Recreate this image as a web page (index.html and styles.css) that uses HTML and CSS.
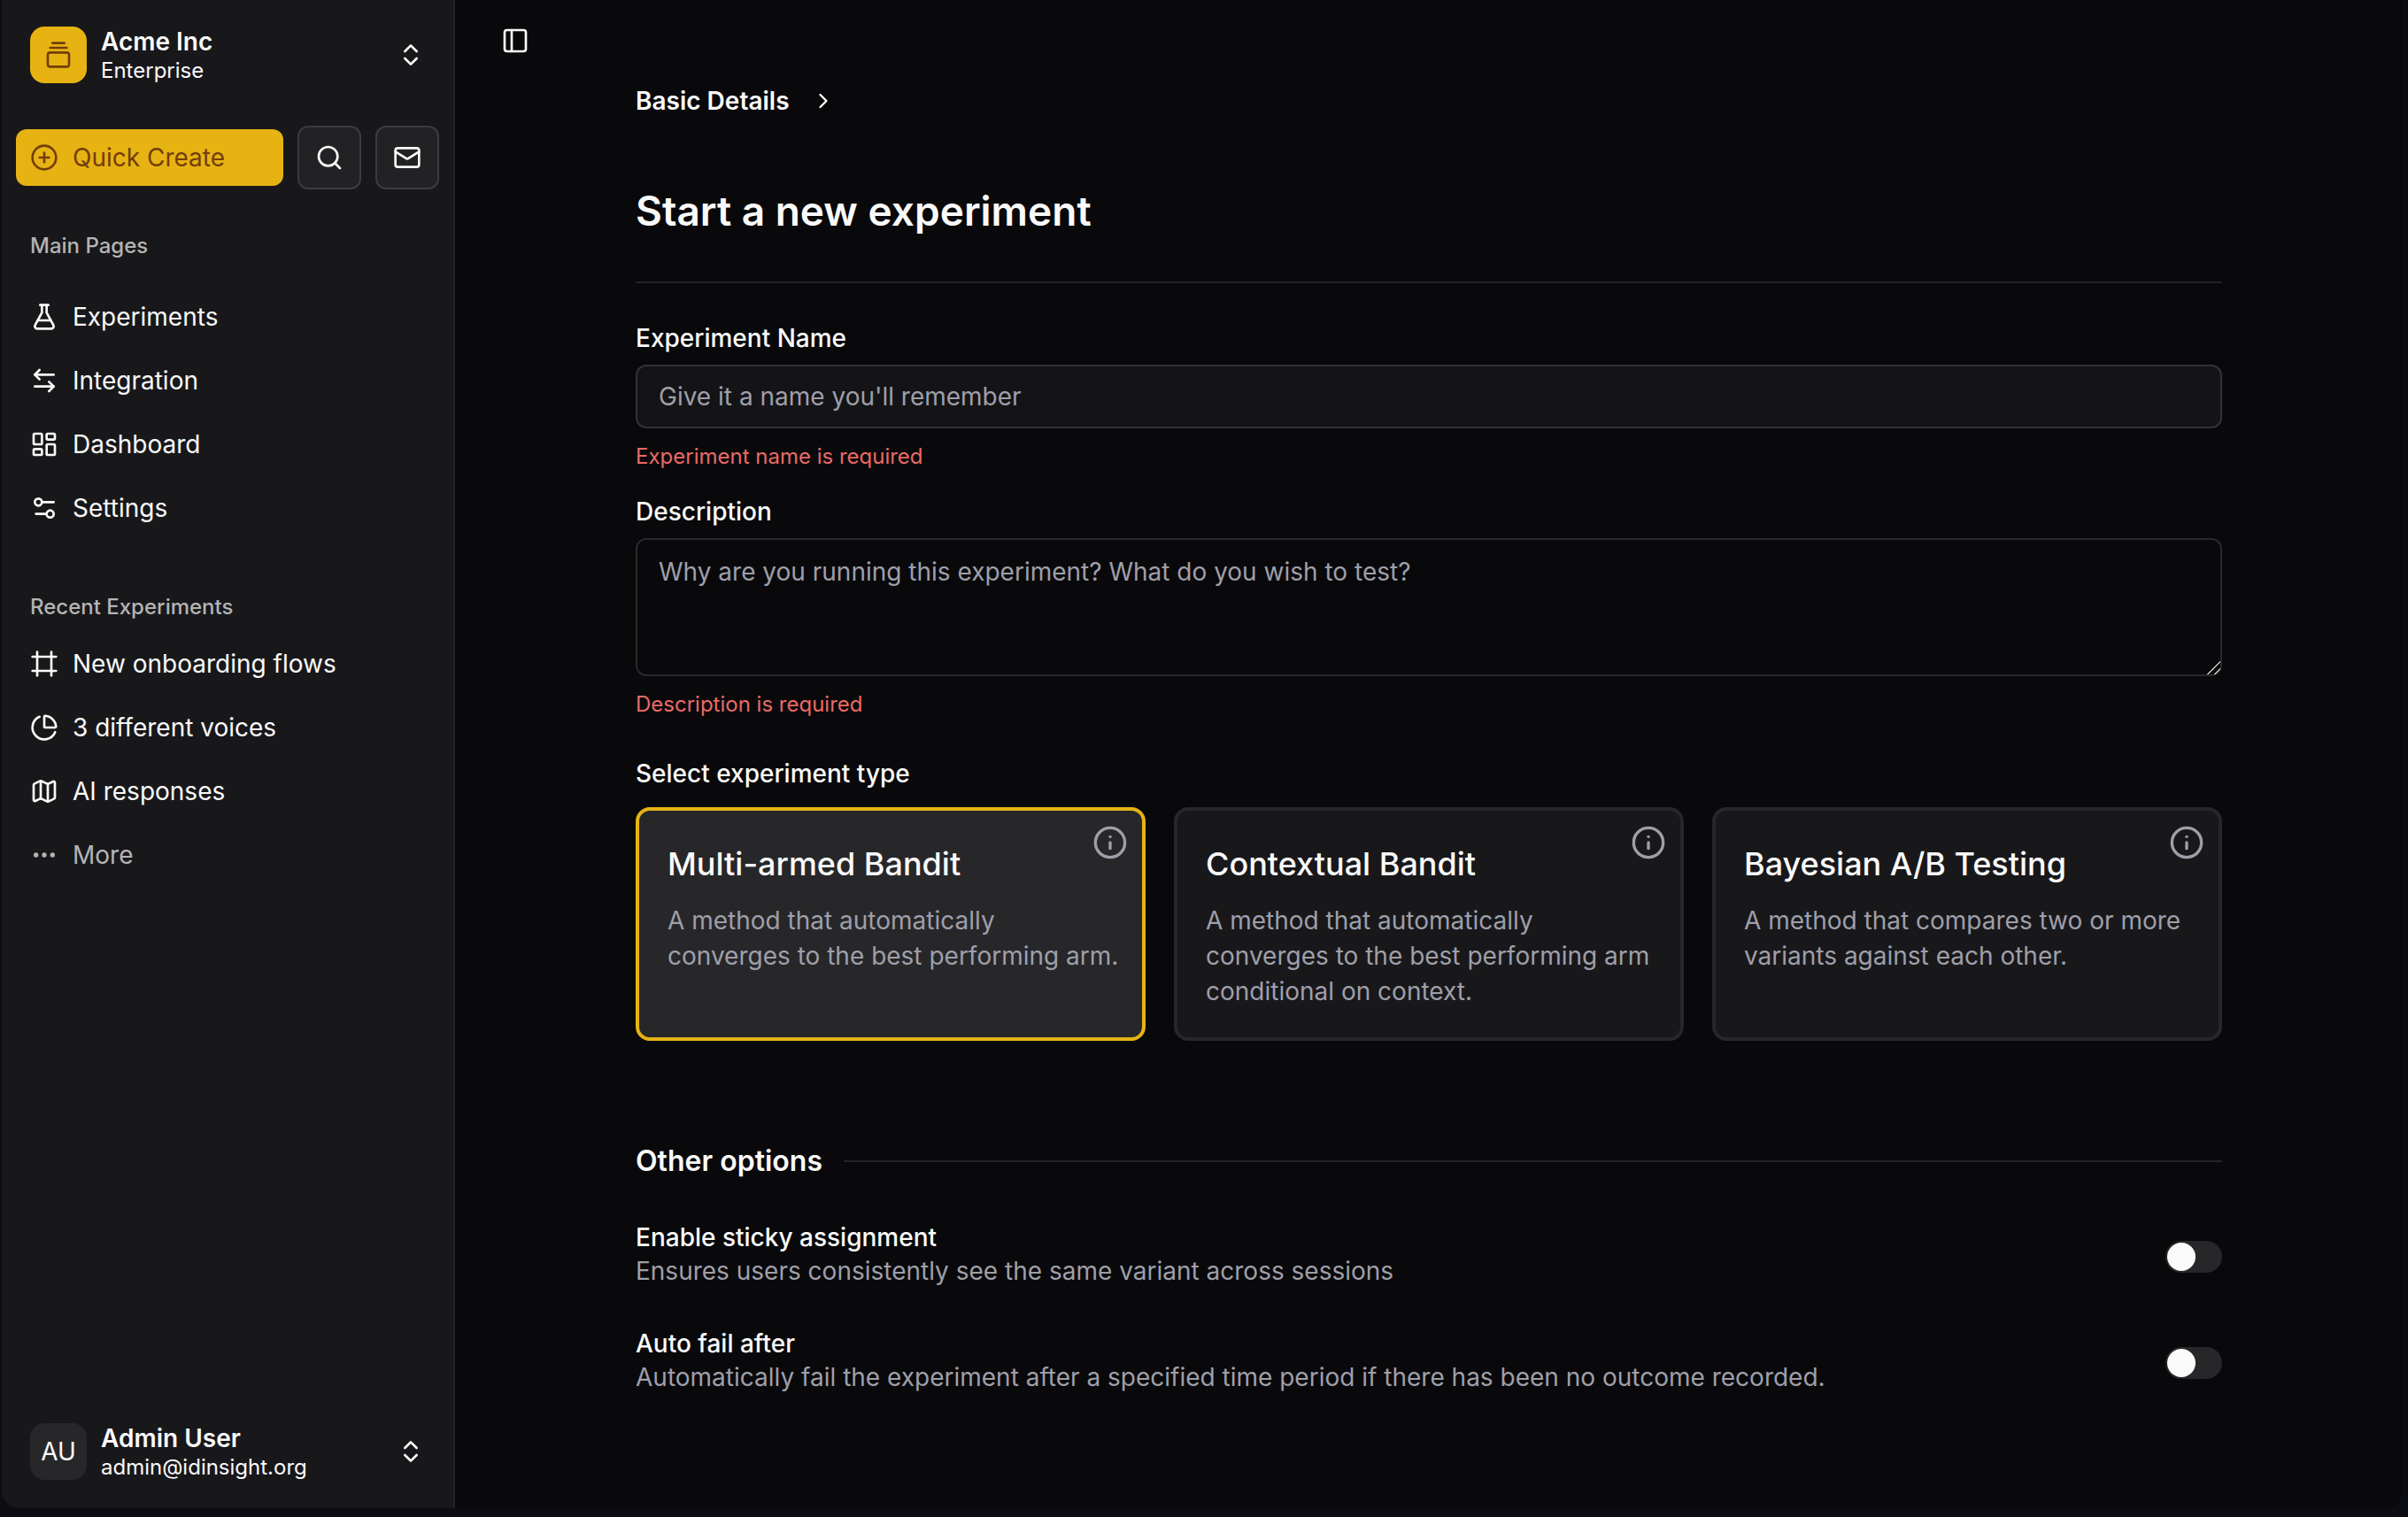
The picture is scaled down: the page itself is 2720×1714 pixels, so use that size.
FILE: index.html
```html
<!DOCTYPE html>
<html lang="en">
<head>
<meta charset="utf-8">
<title>Start a new experiment</title>
<meta name="viewport" content="width=device-width, initial-scale=1">
<link rel="stylesheet" href="styles.css">
</head>
<body>
<div class="app">
  <aside class="sidebar">
    <header class="sidebar-header">
      <button type="button" class="account">
        <span class="account-logo">
          <svg class="icon" viewBox="0 0 24 24"><path d="M7 2h10"/><path d="M5 6h14"/><rect width="18" height="12" x="3" y="10" rx="2"/></svg>
        </span>
        <span class="account-text"><strong>Acme Inc</strong><small>Enterprise</small></span>
        <svg class="icon" viewBox="0 0 24 24"><path d="m7 15 5 5 5-5"/><path d="m7 9 5-5 5 5"/></svg>
      </button>
    </header>
    <div class="actions">
      <button type="button" class="quick-create">
        <svg class="icon" viewBox="0 0 24 24"><circle cx="12" cy="12" r="10"/><path d="M8 12h8"/><path d="M12 8v8"/></svg>
        <span>Quick Create</span>
      </button>
      <button type="button" class="icon-button" aria-label="Search">
        <svg class="icon" viewBox="0 0 24 24"><circle cx="11" cy="11" r="8"/><path d="m21 21-4.3-4.3"/></svg>
      </button>
      <button type="button" class="icon-button" aria-label="Inbox">
        <svg class="icon" viewBox="0 0 24 24"><rect width="20" height="16" x="2" y="4" rx="2"/><path d="m22 7-8.97 5.7a1.94 1.94 0 0 1-2.06 0L2 7"/></svg>
      </button>
    </div>
    <nav class="nav-group nav-main" aria-labelledby="nav-main-title">
      <h2 class="nav-title" id="nav-main-title">Main Pages</h2>
      <ul class="nav-list">
        <li><a class="nav-link" href="#"><svg class="icon" viewBox="0 0 24 24"><path d="M14 2v6a2 2 0 0 0 .245.96l5.51 10.08A2 2 0 0 1 18 22H6a2 2 0 0 1-1.755-2.96l5.51-10.08A2 2 0 0 0 10 8V2"/><path d="M6.453 15h11.094"/><path d="M8.5 2h7"/></svg>Experiments</a></li>
        <li><a class="nav-link" href="#"><svg class="icon" viewBox="0 0 24 24"><path d="m8 3-4 4 4 4"/><path d="M4 7h16"/><path d="m16 21 4-4-4-4"/><path d="M20 17H4"/></svg>Integration</a></li>
        <li><a class="nav-link" href="#"><svg class="icon" viewBox="0 0 24 24"><rect width="7" height="9" x="3" y="3" rx="1"/><rect width="7" height="5" x="14" y="3" rx="1"/><rect width="7" height="9" x="14" y="12" rx="1"/><rect width="7" height="5" x="3" y="16" rx="1"/></svg>Dashboard</a></li>
        <li><a class="nav-link" href="#"><svg class="icon" viewBox="0 0 24 24"><path d="M20 7h-9"/><path d="M14 17H5"/><circle cx="17" cy="17" r="3"/><circle cx="7" cy="7" r="3"/></svg>Settings</a></li>
      </ul>
    </nav>
    <nav class="nav-group" aria-labelledby="nav-recent-title">
      <h2 class="nav-title" id="nav-recent-title">Recent Experiments</h2>
      <ul class="nav-list">
        <li><a class="nav-link" href="#"><svg class="icon" viewBox="0 0 24 24"><path d="M22 6H2"/><path d="M22 18H2"/><path d="M6 2v20"/><path d="M18 2v20"/></svg>New onboarding flows</a></li>
        <li><a class="nav-link" href="#"><svg class="icon" viewBox="0 0 24 24"><path d="M21 12c.552 0 1.005-.449.95-.998a10 10 0 0 0-8.953-8.951c-.55-.055-.998.398-.998.95v8a1 1 0 0 0 1 1z"/><path d="M21.21 15.89A10 10 0 1 1 8 2.83"/></svg>3 different voices</a></li>
        <li><a class="nav-link" href="#"><svg class="icon" viewBox="0 0 24 24"><path d="M14.106 5.553a2 2 0 0 0 1.788 0l3.659-1.83A1 1 0 0 1 21 4.619v12.764a1 1 0 0 1-.553.894l-4.553 2.277a2 2 0 0 1-1.788 0l-4.212-2.106a2 2 0 0 0-1.788 0l-3.659 1.83A1 1 0 0 1 3 19.381V6.618a1 1 0 0 1 .553-.894l4.553-2.277a2 2 0 0 1 1.788 0z"/><path d="M15 5.764v15"/><path d="M9 3.236v15"/></svg>AI responses</a></li>
        <li><a class="nav-link nav-link-muted" href="#"><svg class="icon" viewBox="0 0 24 24"><circle cx="12" cy="12" r="1"/><circle cx="19" cy="12" r="1"/><circle cx="5" cy="12" r="1"/></svg>More</a></li>
      </ul>
    </nav>
    <footer class="sidebar-footer">
      <button type="button" class="account">
        <span class="account-logo account-avatar">AU</span>
        <span class="account-text"><strong>Admin User</strong><small>admin@idinsight.org</small></span>
        <svg class="icon" viewBox="0 0 24 24"><path d="m7 15 5 5 5-5"/><path d="m7 9 5-5 5 5"/></svg>
      </button>
    </footer>
  </aside>
  <main class="main">
    <div class="topbar">
      <button type="button" class="sidebar-toggle" aria-label="Toggle sidebar">
        <svg class="icon" viewBox="0 0 24 24"><rect width="18" height="18" x="3" y="3" rx="2"/><path d="M9 3v18"/></svg>
      </button>
    </div>
    <div class="content">
      <nav class="breadcrumb" aria-label="Steps">
        <a href="#">Basic Details</a>
        <svg class="chevron" viewBox="0 0 24 24"><path d="m9 18 6-6-6-6"/></svg>
      </nav>
      <h1 class="page-title">Start a new experiment</h1>
      <form class="form">
        <div class="field">
          <label for="name">Experiment Name</label>
          <input class="control" id="name" type="text" placeholder="Give it a name you'll remember">
          <p class="error">Experiment name is required</p>
        </div>
        <div class="field">
          <label for="description">Description</label>
          <textarea class="control control-area" id="description" placeholder="Why are you running this experiment? What do you wish to test?"></textarea>
          <p class="error">Description is required</p>
        </div>
        <fieldset class="types">
          <legend>Select experiment type</legend>
          <div class="cards">
            <label class="card">
              <input class="card-radio" type="radio" name="type" checked>
              <span class="card-title">Multi-armed Bandit</span>
              <span class="card-text">A method that automatically converges to the best performing arm.</span>
              <svg class="card-info" viewBox="0 0 24 24"><circle cx="12" cy="12" r="10"/><path d="M12 16v-4"/><path d="M12 8h.01"/></svg>
            </label>
            <label class="card">
              <input class="card-radio" type="radio" name="type">
              <span class="card-title">Contextual Bandit</span>
              <span class="card-text">A method that automatically converges to the best performing arm conditional on context.</span>
              <svg class="card-info" viewBox="0 0 24 24"><circle cx="12" cy="12" r="10"/><path d="M12 16v-4"/><path d="M12 8h.01"/></svg>
            </label>
            <label class="card">
              <input class="card-radio" type="radio" name="type">
              <span class="card-title">Bayesian A/B Testing</span>
              <span class="card-text">A method that compares two or more variants against each other.</span>
              <svg class="card-info" viewBox="0 0 24 24"><circle cx="12" cy="12" r="10"/><path d="M12 16v-4"/><path d="M12 8h.01"/></svg>
            </label>
          </div>
        </fieldset>
        <h2 class="section-title">Other options</h2>
        <div class="options">
          <div class="option">
            <div class="option-text">
              <label for="sticky">Enable sticky assignment</label>
              <p>Ensures users consistently see the same variant across sessions</p>
            </div>
            <input class="switch" id="sticky" type="checkbox" role="switch">
          </div>
          <div class="option">
            <div class="option-text">
              <label for="autofail">Auto fail after</label>
              <p>Automatically fail the experiment after a specified time period if there has been no outcome recorded.</p>
            </div>
            <input class="switch" id="autofail" type="checkbox" role="switch">
          </div>
        </div>
      </form>
    </div>
  </main>
</div>
</body>
</html>
```
FILE: styles.css
```css
:root {
  --frame: #0c0d12;
  --bg: #09090b;
  --sidebar: #18181b;
  --fg: #fafafa;
  --muted: #9f9fa9;
  --line: #242427;
  --surface: #27272a;
  --accent: #e7b313;
  --accent-fg: #733e0a;
  --error: #ea6a66;
}

* { box-sizing: border-box; }

body {
  margin: 0;
  background: var(--frame);
  color: var(--fg);
  font: 400 28px/40px Inter, "Liberation Sans", sans-serif;
}

h1, h2, p, ul { margin: 0; padding: 0; }
ul { list-style: none; }
a { color: inherit; text-decoration: none; }
button, input, textarea { font: inherit; color: inherit; }
button { border: 0; padding: 0; background: none; cursor: pointer; }

svg {
  flex: none;
  fill: none;
  stroke: currentColor;
  stroke-width: 2;
  stroke-linecap: round;
  stroke-linejoin: round;
}
.icon { width: 32px; height: 32px; }

.app {
  display: flex;
  height: calc(100vh - 10px);
  margin: 0 6px 10px 2px;
  border-radius: 0 0 20px 20px;
  overflow: hidden;
  background: var(--bg);
}

/* Sidebar */
.sidebar {
  display: flex;
  flex-direction: column;
  flex: none;
  width: 512px;
  padding: 14px 16px 16px;
  border-right: 2px solid var(--line);
  background: var(--sidebar);
}
.account {
  display: flex;
  align-items: center;
  gap: 16px;
  width: 100%;
  height: 96px;
  padding: 0 16px;
  text-align: left;
}
.account-logo {
  display: grid;
  place-items: center;
  width: 64px;
  height: 64px;
  border-radius: 16px;
  background: var(--accent);
  color: var(--accent-fg);
}
.account-avatar { background: var(--surface); color: var(--fg); }
.account-text { display: grid; flex: 1; }
.account-text strong { font-weight: 600; line-height: 36px; }
.account-text small { font-size: 24px; line-height: 30px; }

.actions {
  display: flex;
  align-items: center;
  gap: 16px;
  padding-top: 32px;
}
.quick-create {
  display: flex;
  align-items: center;
  gap: 16px;
  flex: 1;
  height: 64px;
  padding: 0 16px;
  border-radius: 12px;
  background: var(--accent);
  color: var(--accent-fg);
}
.icon-button {
  display: grid;
  place-items: center;
  width: 72px;
  height: 72px;
  border: 2px solid #3c3c3f;
  border-radius: 12px;
  background: #222225;
}

.nav-group { padding-top: 32px; }
.nav-main { padding-bottom: 16px; }
.nav-title {
  padding: 0 16px;
  color: #b4b4b5;
  font-size: 24px;
  font-weight: 500;
  line-height: 64px;
}
.nav-main .nav-title { padding-bottom: 16px; }
.nav-list { display: grid; gap: 8px; }
.nav-link {
  display: flex;
  align-items: center;
  gap: 16px;
  height: 64px;
  padding: 0 16px;
}
.nav-link-muted { color: #b4b4b5; }
.sidebar-footer { margin-top: auto; }

/* Main column */
.main { flex: 1; min-width: 0; overflow: auto; }
.topbar { padding: 30px 52px 0; }
.sidebar-toggle { display: block; width: 32px; height: 32px; }
.content {
  max-width: 1856px;
  margin: 0 auto;
  padding: 32px 32px 96px;
}
.breadcrumb {
  display: flex;
  align-items: center;
  gap: 24px;
  font-weight: 600;
}
.chevron { width: 28px; height: 28px; }
.page-title {
  padding: 72px 0 48px;
  border-bottom: 2px solid var(--line);
  font-size: 46px;
  font-weight: 600;
  line-height: 64px;
}

.form { padding-top: 42px; }
.field { padding-bottom: 26px; }
.field label { display: block; padding-bottom: 10px; font-weight: 500; }
.control {
  display: block;
  width: 100%;
  height: 72px;
  padding: 0 24px;
  border: 2px solid #333336;
  border-radius: 12px;
  outline: 0;
  background: #141417;
}
.control::placeholder { color: var(--muted); opacity: 1; }
.control-area {
  height: 156px;
  padding: 16px 24px;
  border-color: #2a2a2d;
  background: transparent;
  resize: vertical;
}
.control-area::-webkit-resizer {
  background: linear-gradient(135deg, transparent 47%, #c0c0c0 47%, #c0c0c0 54%, transparent 54%, transparent 74%, #c0c0c0 74%, #c0c0c0 81%, transparent 81%);
}
.error { padding-top: 16px; color: var(--error); font-size: 24px; line-height: 32px; }

.types { min-width: 0; margin: 0; padding: 16px 0 0; border: 0; }
.types legend { float: left; padding: 0; font-weight: 500; }
.cards {
  display: grid;
  grid-template-columns: repeat(3, 1fr);
  gap: 32px;
  clear: both;
  padding-top: 18px;
}
.card {
  position: relative;
  display: flex;
  flex-direction: column;
  gap: 20px;
  padding: 36px 24px 32px 32px;
  border: 4px solid var(--surface);
  border-radius: 16px;
  background: var(--sidebar);
  cursor: pointer;
}
.card:has(.card-radio:checked) { border-color: var(--accent); background: var(--surface); }
.card-radio { position: absolute; margin: 0; opacity: 0; }
.card-title { font-size: 36px; font-weight: 500; line-height: 48px; }
.card-text { color: var(--muted); }
.card-info {
  position: absolute;
  top: 16px;
  right: 16px;
  width: 40px;
  height: 40px;
  color: var(--muted);
}

.section-title {
  display: flex;
  align-items: center;
  gap: 24px;
  padding-top: 112px;
  font-size: 32px;
  font-weight: 600;
  line-height: 48px;
}
.section-title::after { content: ""; flex: 1; height: 2px; background: var(--line); }
.options { display: grid; gap: 40px; padding-top: 44px; }
.option { display: flex; align-items: center; justify-content: space-between; gap: 32px; }
.option-text { padding-bottom: 4px; }
.option-text label { display: block; font-weight: 500; line-height: 36px; }
.option-text p { color: var(--muted); }
.switch {
  appearance: none;
  display: flex;
  align-items: center;
  flex: none;
  width: 64px;
  height: 36px;
  margin: 0;
  padding: 0 2px;
  border-radius: 18px;
  background: var(--surface);
  cursor: pointer;
}
.switch::before {
  content: "";
  width: 32px;
  height: 32px;
  border-radius: 50%;
  background: var(--fg);
}
.switch:checked { justify-content: flex-end; background: var(--accent); }
```
